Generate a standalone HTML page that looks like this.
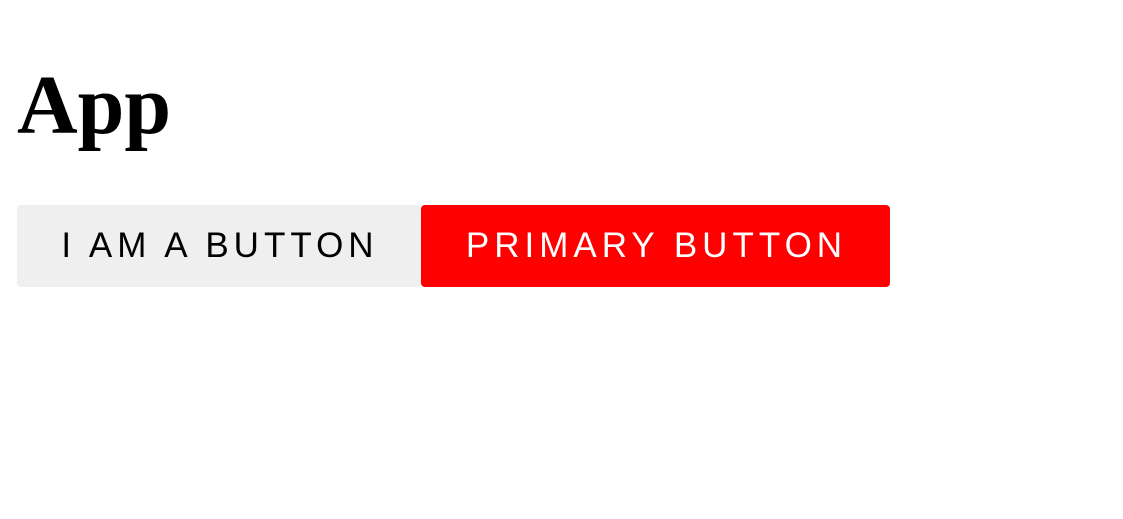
<!DOCTYPE html>
<html><head><style>
body{margin:0;background:#fff;}
h1{position:absolute;left:17px;top:64px;margin:0;font-family:"Liberation Serif",serif;font-weight:bold;font-size:84px;line-height:84px;}
.b{position:absolute;top:205px;height:82px;border-radius:4px;font-family:"Liberation Sans",sans-serif;font-size:35px;letter-spacing:5px;display:flex;align-items:center;justify-content:center;padding-left:2px;box-sizing:border-box;}
.g{left:17px;width:404px;background:#efefef;color:#000;}
.p{left:421px;width:469px;background:#ff0000;color:#fff;}
</style></head><body>
<h1>App</h1>
<div class="b g">I AM A BUTTON</div>
<div class="b p">PRIMARY BUTTON</div>
</body></html>
